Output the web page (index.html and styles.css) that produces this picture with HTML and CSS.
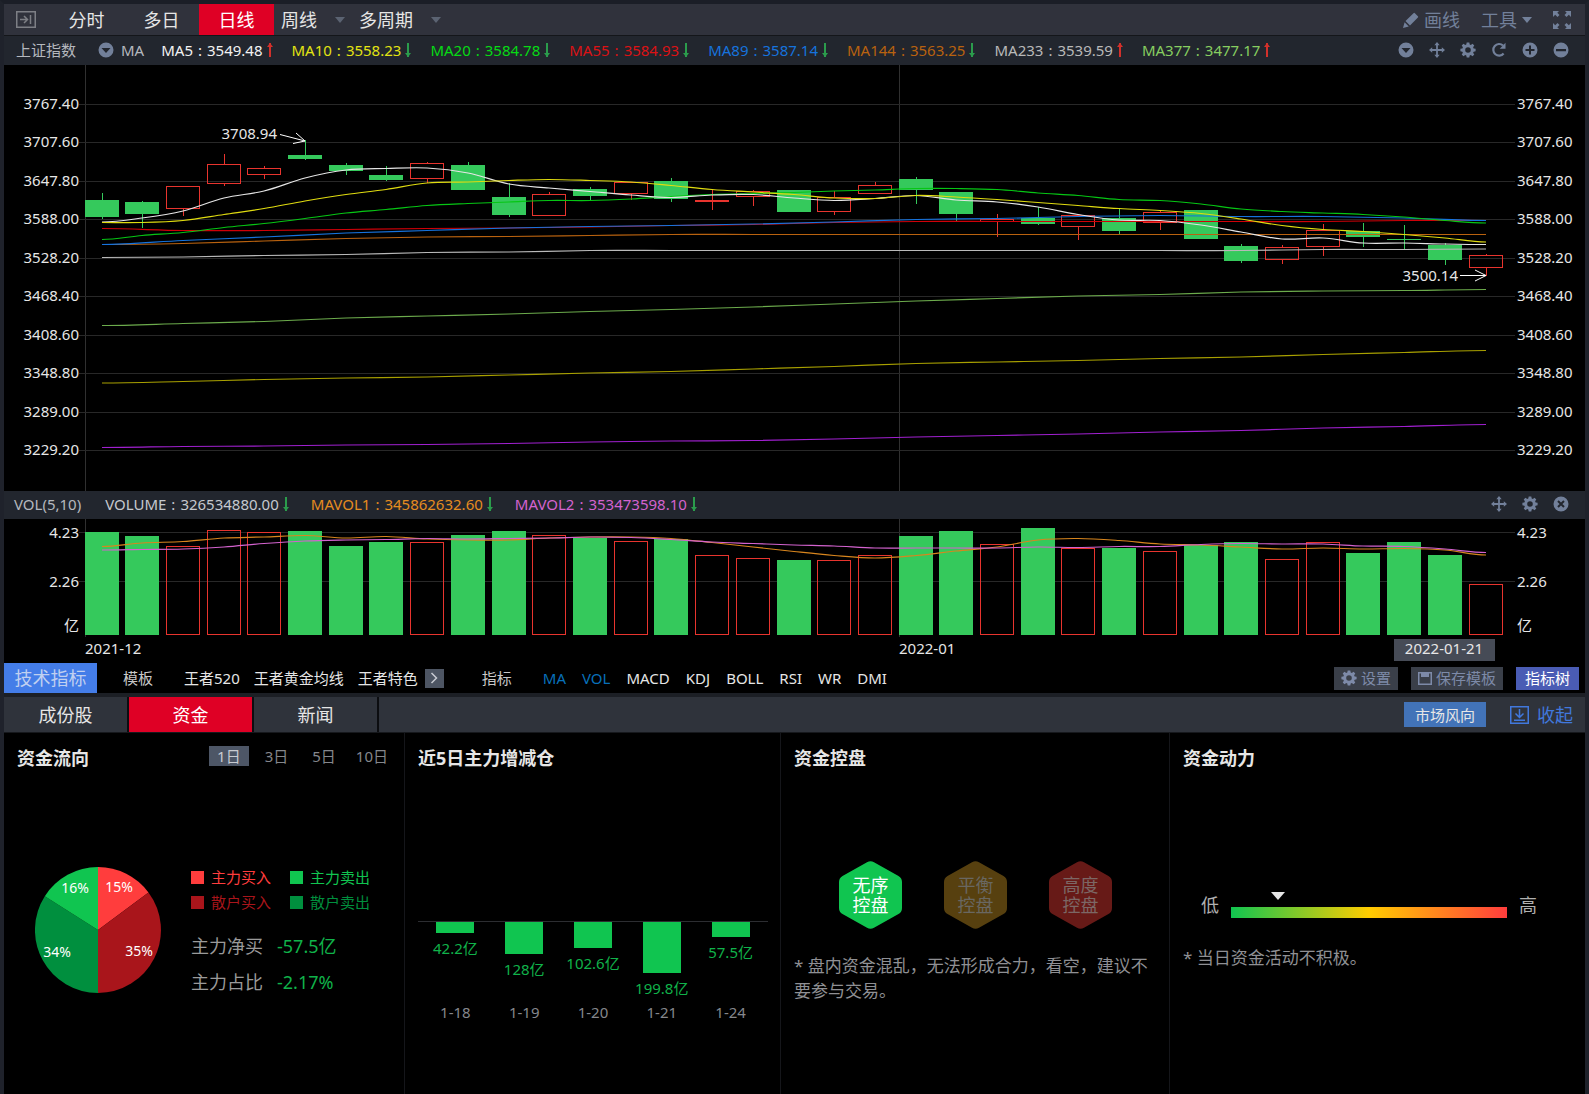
FILE: index.html
```html
<!DOCTYPE html>
<html lang="zh-CN">
<head>
    <meta charset="UTF-8">
    <meta name="viewport" content="width=device-width, initial-scale=1.0">
    <title>上证指数</title>
    <link rel="stylesheet" href="styles.css">
</head>
<body>
    <!-- Shared icons -->
    <svg class="sprite" aria-hidden="true">
        <symbol id="i-down" viewBox="0 0 16 16">
            <path fill-rule="evenodd" d="M8 .5a7.500 7.500 0 1 0 0 15 7.500 7.500 0 0 0 0-15zM3.500 6h9L8 11z"/>
        </symbol>
        <symbol id="i-move" viewBox="0 0 18 18">
            <path d="M9 0l3 3.600h-2V8h4.400V6L18 9l-3.600 3v-2H10v4.400h2L9 18l-3-3.600h2V10H3.600v2L0 9l3.600-3v2H8V3.600H6z"/>
        </symbol>
        <symbol id="i-gear" viewBox="0 0 16 16">
            <path fill-rule="evenodd" d="M6.700.5h2.600l.4 2 1.100.5 1.700-1.200 1.800 1.800-1.200 1.700.5 1.100 2 .4v2.500l-2 .4-.5 1.100 1.200 1.700-1.800 1.800-1.700-1.200-1.100.5-.4 2H6.700l-.4-2-1.100-.5-1.700 1.200-1.800-1.800 1.200-1.700-.5-1.100-2-.4V6.800l2-.4.5-1.100-1.200-1.700 1.800-1.800L5.200 3l1.100-.5zM8 5.200a2.800 2.800 0 1 0 0 5.600 2.800 2.800 0 0 0 0-5.600z"/>
        </symbol>
        <symbol id="i-refresh" viewBox="0 0 16 16">
            <path d="M12.600 11.500A5.800 5.800 0 1 1 12 3.500" fill="none" stroke="currentColor" stroke-width="2.200"/>
            <path d="M14.500.8v6H8.700z"/>
        </symbol>
        <symbol id="i-plus" viewBox="0 0 16 16">
            <path fill-rule="evenodd" d="M8 .5a7.500 7.500 0 1 0 0 15 7.500 7.500 0 0 0 0-15zM7 3.500h2V7h3.500v2H9v3.500H7V9H3.500V7H7z"/>
        </symbol>
        <symbol id="i-minus" viewBox="0 0 16 16">
            <path fill-rule="evenodd" d="M8 .5a7.500 7.500 0 1 0 0 15 7.500 7.500 0 0 0 0-15zM3 7h10v2.200H3z"/>
        </symbol>
        <symbol id="i-close" viewBox="0 0 16 16">
            <circle cx="8" cy="8" r="7.500"/>
            <path d="M5 5l6 6M11 5l-6 6" stroke="#22262e" stroke-width="2"/>
        </symbol>
    </svg>

    <nav class="toolbar">
        <button class="icon-btn dock" aria-label="侧栏">
            <svg class="outline" width="20" height="17" viewBox="0 0 20 17">
                <path d="M.75.75h18.500v15.500H.75zM4 8.500h7M8 5l3.500 3.500L8 12M14.500 4v9"/>
            </svg>
        </button>
        <button class="tab">分时</button>
        <button class="tab">多日</button>
        <button class="tab active">日线</button>
        <button class="tab drop">周线<i class="caret"></i></button>
        <button class="tab drop">多周期<i class="caret"></i></button>
        <div class="tools">
            <button class="tool">
                <svg width="16" height="16" viewBox="0 0 16 16"><path d="M10.500 1.200a1 1 0 0 1 1.400 0l3 3a1 1 0 0 1 0 1.400L7 13.500 2.500 9zM1.600 10.300l4.200 4.200L0 16z"/></svg>
                画线
            </button>
            <button class="tool">工具<i class="caret"></i></button>
            <button class="tool" aria-label="全屏">
                <svg width="18" height="18" viewBox="0 0 18 18"><path d="M0 0h6L4.300 1.700l2.200 2.200-2 2-2.300-2.200L0 6zM18 0h-6l1.700 1.700-2.200 2.200 2 2 2.300-2.200L18 6zM0 18h6l-1.700-1.700 2.200-2.200-2-2-2.300 2.200L0 12zM18 18h-6l1.700-1.700-2.200-2.200 2-2 2.300 2.200L18 12z"/></svg>
            </button>
        </div>
    </nav>

    <header class="info-bar">
        <span class="name">上证指数</span>
        <svg class="icon"><use href="#i-down"/></svg>
        <span class="kind">MA</span>
        <div class="values">
            <span class="value white">MA5<b>:</b>3549.48<i class="up"></i></span>
            <span class="value yellow">MA10<b>:</b>3558.23<i class="dn"></i></span>
            <span class="value green">MA20<b>:</b>3584.78<i class="dn"></i></span>
            <span class="value red">MA55<b>:</b>3584.93<i class="dn"></i></span>
            <span class="value blue">MA89<b>:</b>3587.14<i class="dn"></i></span>
            <span class="value orange">MA144<b>:</b>3563.25<i class="dn"></i></span>
            <span class="value grey">MA233<b>:</b>3539.59<i class="up"></i></span>
            <span class="value lime">MA377<b>:</b>3477.17<i class="up"></i></span>
        </div>
        <div class="icons">
            <button class="icon-btn" aria-label="展开"><svg class="icon"><use href="#i-down"/></svg></button>
            <button class="icon-btn" aria-label="移动"><svg class="icon"><use href="#i-move"/></svg></button>
            <button class="icon-btn" aria-label="设置"><svg class="icon"><use href="#i-gear"/></svg></button>
            <button class="icon-btn" aria-label="刷新"><svg class="icon"><use href="#i-refresh"/></svg></button>
            <button class="icon-btn" aria-label="放大"><svg class="icon"><use href="#i-plus"/></svg></button>
            <button class="icon-btn" aria-label="缩小"><svg class="icon"><use href="#i-minus"/></svg></button>
        </div>
    </header>

    <svg class="chart price-chart" id="priceChart"></svg>

    <header class="info-bar vol-bar">
        <span class="vol-name">VOL(5,10)</span>
        <div class="values">
            <span class="value silver">VOLUME<b>:</b>326534880.00<i class="dn"></i></span>
            <span class="value amber">MAVOL1<b>:</b>345862632.60<i class="dn"></i></span>
            <span class="value pink">MAVOL2<b>:</b>353473598.10<i class="dn"></i></span>
        </div>
        <div class="icons">
            <button class="icon-btn" aria-label="移动"><svg class="icon"><use href="#i-move"/></svg></button>
            <button class="icon-btn" aria-label="设置"><svg class="icon"><use href="#i-gear"/></svg></button>
            <button class="icon-btn" aria-label="关闭"><svg class="icon"><use href="#i-close"/></svg></button>
        </div>
    </header>

    <svg class="chart vol-chart" id="volChart"></svg>

    <div class="indicator-bar">
        <button class="tech">技术指标</button>
        <span class="group-label">模板</span>
        <div class="templates">
            <button>王者520</button>
            <button>王者黄金均线</button>
            <button>王者特色</button>
        </div>
        <button class="more" aria-label="更多">
            <svg class="outline" width="8" height="12" viewBox="0 0 8 12"><path d="M1.500 1l5 5-5 5"/></svg>
        </button>
        <span class="group-label second">指标</span>
        <div class="indicators">
            <button class="on">MA</button>
            <button class="on">VOL</button>
            <button>MACD</button>
            <button>KDJ</button>
            <button>BOLL</button>
            <button>RSI</button>
            <button>WR</button>
            <button>DMI</button>
        </div>
        <div class="actions">
            <button class="action"><svg class="icon"><use href="#i-gear"/></svg>设置</button>
            <button class="action">
                <svg width="14" height="13" viewBox="0 0 14 13"><path d="M.75.75h12.500v11.500H.75z" fill="none" stroke="currentColor" stroke-width="1.500"/><path d="M3 0h8v5H3z"/></svg>
                保存模板
            </button>
            <button class="action tree">指标树</button>
        </div>
    </div>

    <nav class="sub-tabs">
        <button>成份股</button>
        <button class="active">资金</button>
        <button>新闻</button>
        <div class="right">
            <button class="wind">市场风向</button>
            <button class="collapse">
                <svg class="outline" width="19" height="18" viewBox="0 0 19 18"><path d="M.75.75h17.500v16.500H.75zM9.500 3v8M5.500 7.500l4 4 4-4M4 14.200h11"/></svg>
                收起
            </button>
        </div>
    </nav>

    <main class="panels">
        <section class="panel">
            <div class="panel-head">
                <h2>资金流向</h2>
                <div class="days">
                    <button class="active">1日</button>
                    <button>3日</button>
                    <button>5日</button>
                    <button>10日</button>
                </div>
            </div>
            <div class="flow">
                <svg class="pie" width="126" height="128" viewBox="-63 -64 126 128">
                    <path d="M0 0V-63A63 63 0 0 1 50.500-37.600z" fill="#ff3d3d"/>
                    <path d="M0 0L50.500-37.600A63 63 0 0 1 0 63z" fill="#a9151b"/>
                    <path d="M0 0V63A63 63 0 0 1-53.200-33.800z" fill="#008f3e"/>
                    <path d="M0 0L-53.200-33.800A63 63 0 0 1 0-63z" fill="#10c550"/>
                    <text x="21" y="-38">15%</text>
                    <text x="41" y="26">35%</text>
                    <text x="-41" y="27">34%</text>
                    <text x="-23" y="-37">16%</text>
                </svg>
                <div class="flow-info">
                    <ul class="legend">
                        <li class="main-buy">主力买入</li>
                        <li class="main-sell">主力卖出</li>
                        <li class="retail-buy">散户买入</li>
                        <li class="retail-sell">散户卖出</li>
                    </ul>
                    <dl>
                        <dt>主力净买</dt><dd>-57.5亿</dd>
                        <dt>主力占比</dt><dd>-2.17%</dd>
                    </dl>
                </div>
            </div>
        </section>

        <section class="panel">
            <div class="panel-head"><h2>近5日主力增减仓</h2></div>
            <div class="bars">
                <div class="bar-col"><div class="bar-area"><i style="height: 11px"></i>42.2亿</div><span>1-18</span></div>
                <div class="bar-col"><div class="bar-area"><i style="height: 32px"></i>128亿</div><span>1-19</span></div>
                <div class="bar-col"><div class="bar-area"><i style="height: 26px"></i>102.6亿</div><span>1-20</span></div>
                <div class="bar-col"><div class="bar-area"><i style="height: 51px"></i>199.8亿</div><span>1-21</span></div>
                <div class="bar-col"><div class="bar-area"><i style="height: 15px"></i>57.5亿</div><span>1-24</span></div>
            </div>
        </section>

        <section class="panel">
            <div class="panel-head"><h2>资金控盘</h2></div>
            <div class="hexes">
                <div class="hex low">
                    <svg viewBox="0 0 63 68"><path d="M28 1.200Q31.500-.8 35 1.200L59.500 15Q63 17 63 21V47Q63 51 59.500 53L35 66.800Q31.500 68.800 28 66.800L3.500 53Q0 51 0 47V21Q0 17 3.500 15z"/></svg>
                    <span>无序<br>控盘</span>
                </div>
                <div class="hex mid">
                    <svg viewBox="0 0 63 68"><path d="M28 1.200Q31.500-.8 35 1.200L59.500 15Q63 17 63 21V47Q63 51 59.500 53L35 66.800Q31.500 68.800 28 66.800L3.500 53Q0 51 0 47V21Q0 17 3.500 15z"/></svg>
                    <span>平衡<br>控盘</span>
                </div>
                <div class="hex high">
                    <svg viewBox="0 0 63 68"><path d="M28 1.200Q31.500-.8 35 1.200L59.500 15Q63 17 63 21V47Q63 51 59.500 53L35 66.800Q31.500 68.800 28 66.800L3.500 53Q0 51 0 47V21Q0 17 3.500 15z"/></svg>
                    <span>高度<br>控盘</span>
                </div>
            </div>
            <p class="note">* 盘内资金混乱，无法形成合力，看空，建议不要参与交易。</p>
        </section>

        <section class="panel">
            <div class="panel-head"><h2>资金动力</h2></div>
            <div class="power">
                <span>低</span>
                <div class="track"><i class="marker" style="left: 17%"></i></div>
                <span>高</span>
            </div>
            <p class="note">* 当日资金活动不积极。</p>
        </section>
    </main>

    <script src="chart.js"></script>
</body>
</html>
```

FILE: styles.css
```css
* {
    margin: 0;
    padding: 0;
    box-sizing: border-box;
}

body {
    display: flex;
    flex-direction: column;
    min-height: 100vh;
    background: #000;
    color: #e6e6e6;
    font-family: "Noto Sans", "Noto Sans CJK SC", sans-serif;
    font-size: 15px;
    line-height: 20px;
    border: solid #1f222b;
    border-width: 0 4px;
    border-top: 4px solid #1b1e27;
}

button {
    background: none;
    border: none;
    color: inherit;
    font: inherit;
    white-space: nowrap;
    cursor: pointer;
}

svg {
    fill: currentColor;
    flex-shrink: 0;
}

.outline {
    fill: none;
    stroke: currentColor;
    stroke-width: 1.5;
}

.sprite {
    position: absolute;
    width: 0;
    height: 0;
}

.icon {
    width: 16px;
    height: 16px;
}

.icon-btn {
    display: flex;
}

/* Top toolbar */
.toolbar {
    display: flex;
    align-items: stretch;
    height: 32px;
    background: #30323c;
    border-bottom: 1px solid #14161a;
    font-size: 18px;
}

.dock {
    align-items: center;
    width: 45px;
    padding-left: 12px;
    color: #7d7f85;
}

.tab {
    width: 75px;
}

.tab.active {
    background: #df0025;
    color: #fff;
}

.tab.drop {
    display: flex;
    align-items: center;
    gap: 18px;
    width: auto;
    padding: 0 7px;
}

.caret {
    border: 5px solid transparent;
    border-top: 6px solid #5b6372;
    border-bottom: none;
}

.tools {
    display: flex;
    align-items: center;
    gap: 21px;
    margin-left: auto;
    padding-right: 14px;
    color: #72809a;
}

.tool {
    display: flex;
    align-items: center;
    gap: 5px;
}

.tool .caret {
    border-top-color: #72809a;
}

/* Indicator value bars */
.info-bar {
    display: flex;
    align-items: center;
    height: 29px;
    padding: 0 0 2px 12px;
    background: #22262e;
    color: #72809a;
}

.name {
    margin-right: 22px;
    color: #b5b8be;
}

.kind {
    margin: 0 17px 0 7px;
    color: #b5b8be;
}

.values {
    display: flex;
    gap: 19px;
}

.value {
    display: flex;
    align-items: center;
    white-space: nowrap;
}

.value b {
    width: 14px;
    font-weight: 400;
    text-align: center;
}

.up,
.dn {
    position: relative;
    width: 2px;
    height: 14px;
    margin: 0 2px 0 6px;
    background: #2b9c4c;
}

.up {
    background: #d3302b;
}

.up::after,
.dn::after {
    content: "";
    position: absolute;
    left: -2px;
    bottom: 0;
    border: 3px solid transparent;
    border-top: 4px solid #2b9c4c;
    border-bottom: none;
}

.up::after {
    top: 0;
    bottom: auto;
    border-top: none;
    border-bottom: 4px solid #d3302b;
}

.white { color: #f2f2f2; }
.yellow { color: #e3e312; }
.green { color: #06da14; }
.red { color: #dc1215; }
.blue { color: #1673dd; }
.orange { color: #b9620f; }
.grey { color: #b9b9b9; }
.lime { color: #87ce60; }
.silver { color: #c6c9ce; }
.amber { color: #e58c20; }
.pink { color: #d463cf; }

.icons {
    display: flex;
    gap: 15px;
    margin-left: auto;
    padding-right: 16px;
}

.vol-bar {
    height: 28px;
    padding-left: 10px;
}

.vol-bar .values {
    gap: 22px;
}

.vol-name {
    margin-right: 24px;
    color: #b5b8be;
}

/* Charts */
.chart {
    display: block;
    width: 100%;
    color: #e6e6e6;
}

.price-chart {
    height: 426px;
}

.vol-chart {
    height: 144px;
}

.chart text {
    fill: #e6e6e6;
}

/* Indicator picker */
.indicator-bar {
    display: flex;
    align-items: center;
    height: 34px;
    padding-right: 6px;
    border-bottom: 4px solid #1c1f25;
}

.tech {
    align-self: stretch;
    width: 93px;
    background: #447de8;
    color: #c0d0f0;
    font-size: 18px;
}

.group-label {
    margin: 0 31px 0 26px;
    color: #c8c8c8;
}

.group-label.second {
    margin-left: 38px;
}

.templates {
    display: flex;
    gap: 14px;
    margin-right: 7px;
}

.indicators {
    display: flex;
    gap: 16px;
}

.more {
    display: flex;
    align-items: center;
    justify-content: center;
    width: 19px;
    height: 19px;
    background: #4d5563;
    color: #c8cbd2;
}

.on {
    color: #0870ba;
}

.actions {
    display: flex;
    gap: 13px;
    margin-left: auto;
}

.action {
    display: flex;
    align-items: center;
    gap: 4px;
    height: 23px;
    padding: 0 7px;
    background: #3a3f49;
    color: #7d8aa8;
}

.action.tree {
    padding: 0 9px;
    background: #4a5cb4;
    color: #fff;
}

/* Lower tabs */
.sub-tabs {
    display: flex;
    height: 36px;
    background: #2f333b;
    border-bottom: 1px solid #16181c;
    font-size: 18px;
}

.sub-tabs > button {
    width: 125px;
    border-right: 2px solid #0c0d10;
}

.sub-tabs > .active {
    background: #df0025;
    color: #fff;
}

.sub-tabs .right {
    display: flex;
    align-items: center;
    gap: 24px;
    margin-left: auto;
    padding-right: 12px;
}

.wind {
    height: 25px;
    padding: 0 11px;
    background: #4273b8;
    font-size: 15px;
}

.collapse {
    display: flex;
    align-items: center;
    gap: 8px;
    color: #4178dd;
}

/* Capital panels */
.panels {
    display: grid;
    grid-template-columns: 401fr 376fr 389fr 415fr;
    flex: 1;
}

.panel {
    padding: 12px 12px 12px 13px;
    border-right: 1px solid #15161a;
}

.panel:last-child {
    border-right: none;
}

.panel-head {
    display: flex;
    justify-content: space-between;
    height: 28px;
}

h2 {
    font-size: 18px;
    font-weight: 700;
    line-height: 26px;
}

.days {
    display: flex;
    gap: 8px;
    padding-top: 1px;
    color: #85878c;
}

.days button {
    height: 20px;
    padding: 0 8px;
}

.days button:last-child {
    padding: 0 4px;
}

.days .active {
    background: #4d5666;
    color: #c8cbd2;
}

.flow {
    display: flex;
    gap: 30px;
    margin: 91px 0 0 18px;
}

.pie {
    margin-top: 2px;
}

.pie text {
    fill: #fff;
    font-size: 14px;
    text-anchor: middle;
}

.legend {
    display: grid;
    grid-template-columns: repeat(2, max-content);
    gap: 5px 19px;
    margin-bottom: 21px;
    padding-top: 3px;
    list-style: none;
}

.legend li {
    display: flex;
    align-items: center;
    gap: 7px;
}

.legend li::before {
    content: "";
    width: 13px;
    height: 13px;
    background: currentColor;
}

.main-buy { color: #ff3d3d; }
.main-sell { color: #10c550; }
.retail-buy { color: #a9151b; }
.retail-sell { color: #008f3e; }

dl {
    display: grid;
    grid-template-columns: repeat(2, max-content);
    gap: 10px 14px;
    font-size: 18px;
    line-height: 26px;
}

dt {
    color: #9a9a9a;
}

dd {
    color: #10b24a;
}

/* Five day bars */
.bars {
    display: flex;
    margin-top: 148px;
    padding: 0 3px;
    border-top: 1px solid #2c2d31;
    color: #10b24a;
}

.bar-col {
    flex: 1;
    text-align: center;
}

.bar-area {
    height: 80px;
}

.bar-area i {
    display: block;
    width: 38px;
    margin: 0 auto 5px;
    background: #10c550;
}

.bar-col span {
    color: #85878c;
}

/* Control level */
.hexes {
    display: flex;
    justify-content: center;
    gap: 42px;
    margin: 88px 0 24px;
}

.hex {
    display: grid;
    place-items: center;
    width: 63px;
    height: 68px;
    font-size: 18px;
}

.hex > * {
    grid-area: 1 / 1;
}

.low { fill: #10c550; color: #fff; }
.mid { fill: #57400f; color: #696761; }
.high { fill: #671a17; color: #7c6765; }

.hex svg {
    fill: inherit;
}

.note {
    color: #8f9094;
    font-size: 17px;
    line-height: 25px;
}

/* Power gauge */
.power {
    display: flex;
    align-items: center;
    gap: 12px;
    margin: 119px 36px 27px 18px;
    color: #b0b0b0;
    font-size: 18px;
    line-height: 26px;
}

.track {
    position: relative;
    flex: 1;
    height: 11px;
    margin-top: 14px;
    background: linear-gradient(to right, #10c550, #ffcc00 50%, #ff3d3d);
}

.marker {
    position: absolute;
    top: -15px;
    margin-left: -7px;
    border: 7px solid transparent;
    border-top: 8px solid #e6e6e6;
    border-bottom: none;
}
```

FILE: chart.js
```javascript
// Candles: [direction, high, body top, body bottom, low]
const candles = [
    ['g', 193, 200, 217, 219], ['g', 201, 202, 214, 228], ['r', 186, 186, 209, 216],
    ['r', 154, 164, 184, 186], ['r', 166, 168, 175, 179], ['g', 140, 155, 159, 160],
    ['g', 163, 165, 171, 175], ['g', 166, 175, 180, 181], ['r', 162, 163, 179, 183],
    ['g', 162, 165, 190, 190], ['g', 183, 197, 215, 217], ['r', 192, 194, 216, 216],
    ['g', 187, 189, 196, 200], ['r', 182, 182, 194, 200], ['g', 178, 181, 199, 202],
    ['r', 189, 200, 202, 210], ['r', 190, 191, 197, 206], ['g', 190, 190, 212, 212],
    ['r', 191, 197, 212, 215], ['r', 182, 185, 194, 194], ['g', 177, 179, 190, 204],
    ['g', 192, 192, 214, 221], ['r', 214, 219, 222, 237], ['g', 207, 218, 224, 225],
    ['r', 215, 215, 227, 240], ['g', 209, 218, 231, 234], ['r', 210, 212, 223, 230],
    ['g', 210, 210, 239, 239], ['g', 244, 246, 261, 263], ['r', 245, 247, 260, 264],
    ['r', 224, 230, 247, 256], ['g', 223, 231, 237, 247], ['g', 225, 239, 240, 249],
    ['g', 243, 245, 260, 265], ['r', 254, 255, 268, 276]
];

// Averages: colour, step between points in days, y values
const averages = [
    ['#a020d0', 2, [447.5, 446.5, 446, 445, 444.5, 443.5, 442, 441, 440.5, 439, 437, 435.5, 434, 432, 430.5, 428, 426.5, 424.5]],
    ['#a8a000', 2, [383, 381.5, 379.5, 378, 377, 375, 373, 371.5, 369, 366.5, 363.5, 362, 360.5, 358.5, 357, 354.5, 352.5, 350.5]],
    ['#6cab4c', 2, [325.5, 323.5, 321.5, 318, 316, 314, 311.5, 309.5, 307, 304, 301, 298.5, 296, 294.5, 292, 291, 290.5, 289.5]],
    ['#b9b9b9', 2, [257.5, 257, 255.5, 254.5, 252.5, 252, 250.5, 250.5, 250.5, 250.5, 250.5, 250.5, 250.5, 250.5, 250.5, 249.5, 249.5, 249]],
    ['#b9620f', 2, [244.5, 243.5, 241, 238.5, 237, 236.5, 235.5, 234.5, 234.5, 234.5, 234.5, 234.5, 234.5, 234.5, 234.5, 234.5, 234.5, 234.5]],
    ['#d00008', 2, [228.5, 230.5, 230.5, 229.5, 228.5, 228, 227, 225.5, 224.5, 222.5, 221.5, 221.5, 221.5, 221.5, 221.5, 221.5, 220.5, 220.5]],
    ['#1673dd', 2, [244.5, 240.5, 237, 233, 230.5, 228, 226.5, 225.5, 224, 222, 219.5, 218.5, 216.5, 215.5, 216.5, 216.5, 218, 220.5]],
    ['#06c614', 1, [239.5, 235.5, 232.5, 227.5, 223.5, 218.5, 213, 209.5, 205.5, 203.5, 202, 200.5, 200.5, 199, 196.5, 194.5, 193.5, 192.5, 191, 190, 188.5, 188.5, 189.5, 193, 195.5, 199.5, 200.5, 204, 209, 211.5, 213, 214.5, 217, 220.5, 223]],
    ['#e6e6e6', 1, [222, 218, 211, 198, 191, 178, 170, 168.5, 168, 173, 184, 188, 191.5, 195, 197.5, 195, 194.5, 198, 200.5, 198.5, 195.5, 200, 202, 207, 214.5, 220, 220.5, 225, 232, 239, 238, 243, 243, 244, 244.5]],
    ['#e0dc10', 1, [222.5, 222.5, 220.5, 214.5, 208.5, 201, 194.5, 189.5, 183, 182, 180.5, 179.5, 180.5, 182, 185.5, 189.5, 192, 194.5, 198, 198.5, 195.5, 197, 199.5, 202.5, 205.5, 208.5, 210.5, 213.5, 219, 225.5, 229.5, 231.5, 234.5, 238, 242]]
];

const volumes = [
    532, 536, 546, 530, 532, 531, 546, 542, 542, 535, 531, 535, 538, 541, 539, 555, 558, 560,
    560, 555, 536, 531, 544, 528, 548, 548, 551, 545, 542, 559, 542, 553, 542, 555, 584
];

const volAverages = [
    ['#d8861e', 1, [546.5, 543, 541.5, 538, 537, 535.5, 538, 536.5, 539, 540, 540, 538, 537, 537, 538.5, 542.5, 547, 551.5, 555.5, 558, 555.5, 551, 547, 540, 538.5, 540.5, 544, 545, 547, 549, 548, 549, 548.5, 550, 555]],
    ['#d463cf', 1, [550, 549.5, 549, 547, 543.5, 541, 540, 539.5, 538.5, 539, 538.5, 538, 537, 537.5, 539.5, 542, 543.5, 545, 546, 548, 548, 548, 548, 547, 547.5, 546.5, 546.5, 544.5, 543.5, 544, 544, 546, 546.5, 549, 552.5]]
];

const priceLabels = ['3767.40', '3707.60', '3647.80', '3588.00', '3528.20', '3468.40', '3408.60', '3348.80', '3289.00', '3229.20'];

const COLORS = { g: '#35c95c', r: '#e8342e' };
const LEFT = 85;      // plot left edge, counted from the window like all y values
const BODY = 34;
const MARGIN = 4;

function line(x1, y1, x2, y2, color) {
    return `<path d="M${x1} ${y1}L${x2} ${y2}" stroke="${color}" fill="none"/>`;
}

function label(x, y, text, anchor) {
    return `<text x="${x}" y="${y + 5}" text-anchor="${anchor || 'start'}">${text}</text>`;
}

function box(x, top, bottom, dir) {
    if (dir === 'g') {
        return `<rect x="${x}" y="${top}" width="${BODY}" height="${bottom - top}" fill="${COLORS.g}"/>`;
    }
    return `<rect x="${x + 0.5}" y="${top + 0.5}" width="${BODY - 1}" height="${bottom - top - 1}" fill="none" stroke="${COLORS.r}"/>`;
}

// Smooth curve through the points
function curve([color, step, ys], center) {
    let d = '';
    ys.forEach((y, i) => {
        const x = center(i * step);
        if (i === 0) {
            d = `M${x} ${y}`;
        } else {
            const px = center((i - 1) * step);
            const prev = ys[i - 1];
            const slopeA = i > 1 ? (y - ys[i - 2]) / 6 : 0;
            const slopeB = i < ys.length - 1 ? (ys[i + 1] - prev) / 6 : 0;
            const third = (x - px) / 3;
            d += `C${px + third} ${prev + slopeA} ${x - third} ${y - slopeB} ${x} ${y}`;
        }
    });
    return `<path d="${d}" fill="none" stroke="${color}" stroke-width="1.2"/>`;
}

function draw() {
    const price = document.getElementById('priceChart');
    const vol = document.getElementById('volChart');
    const width = price.clientWidth;
    const right = width + MARGIN;
    const plotEnd = right - 82;
    const step = (plotEnd - LEFT - BODY) / (candles.length - 1);
    const left = i => Math.floor(LEFT + i * step);
    const center = i => left(i) + BODY / 2;
    const monthX = left(20) + 0.5;
    const gridEnd = right - 70;

    price.setAttribute('viewBox', `${MARGIN} 65 ${width} 426`);
    let out = line(LEFT + 0.5, 65, LEFT + 0.5, 491, '#303030') + line(monthX, 65, monthX, 491, '#303030');
    priceLabels.forEach((text, i) => {
        const y = Math.floor(104 + i * 38.5);
        out += line(79, y + 0.5, gridEnd, y + 0.5, '#282828');
        out += label(79, y, text, 'end') + label(right - 68, y, text);
    });
    candles.forEach(([dir, high, top, bottom, low], i) => {
        const x = center(i) + 0.5;
        out += line(x, high, x, top, COLORS[dir]) + line(x, bottom, x, low, COLORS[dir]);
        out += box(left(i), top, bottom, dir);
    });
    averages.forEach(a => { out += curve(a, center); });

    // Highest and lowest marks
    const hx = center(5);
    out += label(hx - 28, 134, '3708.94', 'end');
    out += `<path d="M${hx - 25} 134.5L${hx} 141M${hx - 9} 133L${hx} 141L${hx - 12} 143.500" fill="none" stroke="#fff"/>`;
    const lx = center(34);
    out += label(lx - 28, 276, '3500.14', 'end');
    out += `<path d="M${lx - 26} 275.5H${lx}M${lx - 11} 270L${lx} 275.5L${lx - 11} 281" fill="none" stroke="#fff"/>`;
    price.innerHTML = out;

    vol.setAttribute('viewBox', `${MARGIN} 519 ${width} 144`);
    out = line(LEFT + 0.5, 519, LEFT + 0.5, 637, '#303030') + line(monthX, 519, monthX, 637, '#303030');
    [[532, '4.23'], [581, '2.26']].forEach(([y, text]) => {
        out += line(79, y + 0.5, gridEnd, y + 0.5, '#282828');
        out += label(79, y + 1, text, 'end') + label(right - 68, y + 1, text);
    });
    out += label(79, 626, '亿', 'end') + label(right - 68, 626, '亿');
    volumes.forEach((top, i) => { out += box(left(i), top, 635, candles[i][0]); });
    volAverages.forEach(a => { out += curve(a, center); });
    out += label(LEFT, 649, '2021-12') + label(left(20), 649, '2022-01');
    out += `<rect x="${right - 191}" y="639" width="101" height="22" fill="#464b56"/>`;
    out += label(right - 141, 649, '2022-01-21', 'middle');
    vol.innerHTML = out;
}

draw();
window.addEventListener('resize', draw);
```
